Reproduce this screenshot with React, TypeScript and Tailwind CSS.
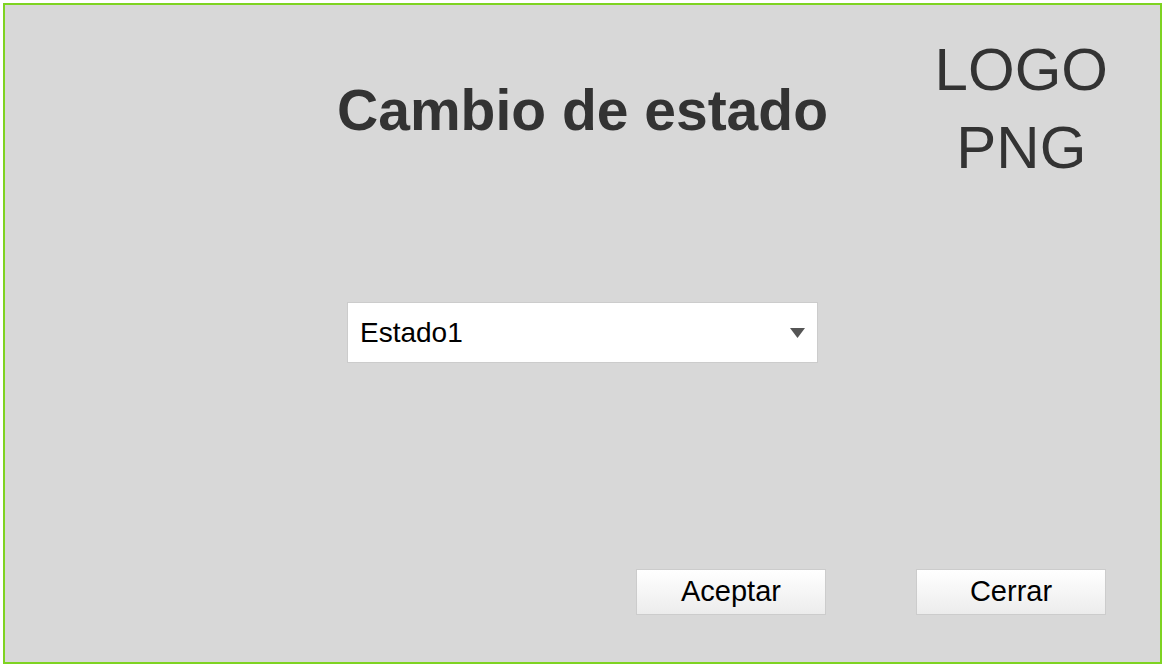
import { useState } from "react";

const ESTADOS = ["Estado1", "Estado2", "Estado3"];

export default function App() {
  const [estado, setEstado] = useState(ESTADOS[0]);

  return (
    <div className="min-h-[668px] bg-white pt-[3px] pl-[3px] font-['Liberation_Sans',Arial,sans-serif]">
      <div className="flex h-[661px] w-[1159px] flex-col border-2 border-[#7ed321] bg-[#d8d8d8]">
        <div className="grid grid-cols-[1fr_auto_1fr] items-start">
          <div />
          <h1 className="mt-[73px] text-[57px] font-bold leading-[1.15] text-[#333333]">
            Cambio de estado
          </h1>
          <div className="flex justify-end pt-[26px] pr-[52px]">
            <div className="text-center text-[60px] leading-[78px] text-[#333333]">
              LOGO
              <br />
              PNG
            </div>
          </div>
        </div>

        <div className="mt-[115px] flex justify-center">
          <div className="relative h-[61px] w-[471px] border border-[#cccccc] bg-white">
            <select
              value={estado}
              onChange={(e) => setEstado(e.target.value)}
              className="h-full w-full appearance-none bg-transparent pl-[12px] text-[28px] text-black outline-none"
            >
              {ESTADOS.map((e) => (
                <option key={e}>{e}</option>
              ))}
            </select>
            <svg
              className="pointer-events-none absolute right-[12px] top-[25px]"
              width="15"
              height="10"
              viewBox="0 0 15 10"
            >
              <path d="M0 0 L15 0 L7.5 10 Z" fill="#555555" />
            </svg>
          </div>
        </div>

        <div className="mt-auto mb-[47px] flex justify-end gap-[90px] pr-[54px]">
          <button
            type="button"
            className="h-[46px] w-[190px] border border-[#cccccc] bg-gradient-to-b from-white to-[#ececec] text-[29px] text-black"
          >
            Aceptar
          </button>
          <button
            type="button"
            className="h-[46px] w-[190px] border border-[#cccccc] bg-gradient-to-b from-white to-[#ececec] text-[29px] text-black"
          >
            Cerrar
          </button>
        </div>
      </div>
    </div>
  );
}
